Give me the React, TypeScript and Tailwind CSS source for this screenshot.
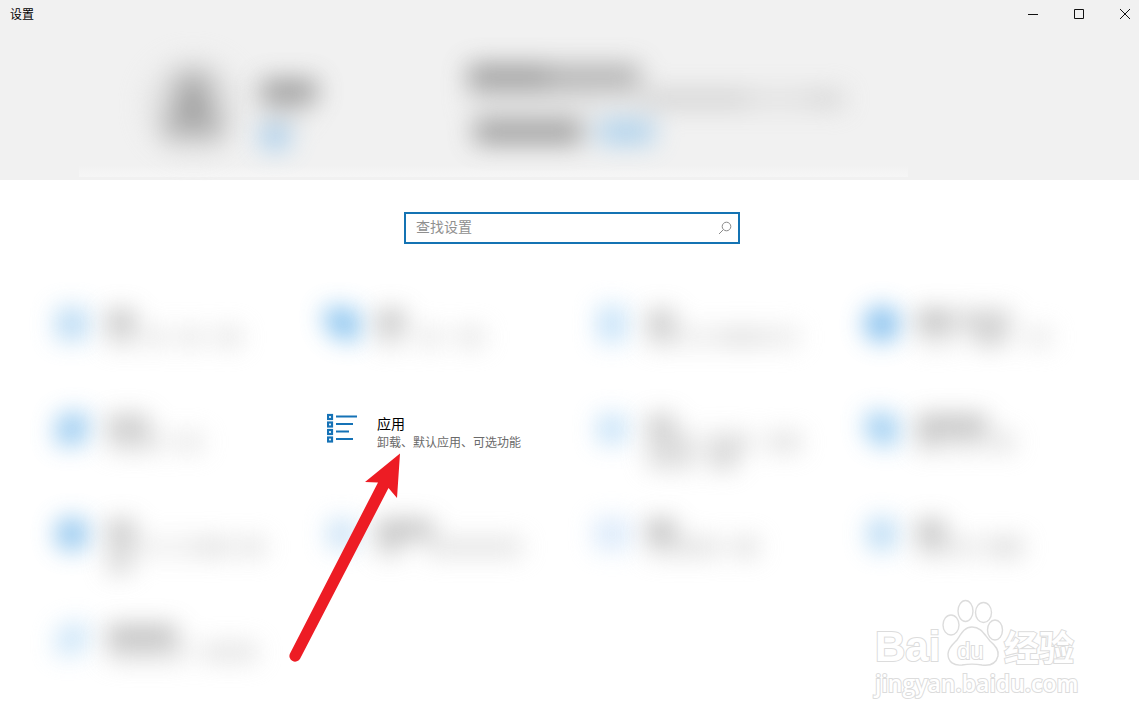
import React, { useState } from 'react';

type Bar = { width: number; tone: string };

type Category = {
  id: string;
  icon: string;
  title: Bar[];
  lines: Bar[][];
};

const GAP = 'bg-transparent';

// Categories whose names are hidden behind a blur
const hiddenBefore: Category[] = [
  {
    id: 'system',
    icon: 'w-8 h-8 bg-[#aed5f2]',
    title: [{ width: 28, tone: 'bg-[#acacac]' }],
    lines: [[{ width: 28, tone: 'bg-[#d2d2d2]' }, { width: 8, tone: GAP }, { width: 25, tone: 'bg-[#dedede]' }, { width: 12, tone: GAP }, { width: 22, tone: 'bg-[#d8d8d8]' }, { width: 14, tone: GAP }, { width: 25, tone: 'bg-[#d8d8d8]' }]],
  },
  {
    id: 'devices',
    icon: 'w-9 h-8 rounded-bl-3xl rounded-tr-xl bg-[#74b9ec]',
    title: [{ width: 28, tone: 'bg-[#acacac]' }],
    lines: [[{ width: 26, tone: 'bg-[#d4d4d4]' }, { width: 14, tone: GAP }, { width: 26, tone: 'bg-[#dedede]' }, { width: 14, tone: GAP }, { width: 27, tone: 'bg-[#dadada]' }]],
  },
  {
    id: 'phone',
    icon: 'w-7 h-9 bg-[#bbddf7]',
    title: [{ width: 28, tone: 'bg-[#b6b6b6]' }],
    lines: [[{ width: 28, tone: 'bg-[#cecece]' }, { width: 48, tone: 'bg-[#e6e6e6]' }, { width: 36, tone: 'bg-[#d4d4d4]' }, { width: 40, tone: 'bg-[#e2e2e2]' }]],
  },
  {
    id: 'network',
    icon: 'w-9 h-9 rounded-full bg-[#70b5eb]',
    title: [{ width: 34, tone: 'bg-[#a4a4a4]' }, { width: 6, tone: GAP }, { width: 54, tone: 'bg-[#c2c2c2]' }],
    lines: [[{ width: 40, tone: 'bg-[#dedede]' }, { width: 16, tone: GAP }, { width: 34, tone: 'bg-[#c2c2c2]' }, { width: 18, tone: GAP }, { width: 26, tone: 'bg-[#e0e0e0]' }]],
  },
  {
    id: 'personalization',
    icon: 'w-8 h-8 rounded-tl-xl rounded-br-xl bg-[#88c2ee]',
    title: [{ width: 42, tone: 'bg-[#b6b6b6]' }],
    lines: [[{ width: 54, tone: 'bg-[#d2d2d2]' }, { width: 12, tone: GAP }, { width: 30, tone: 'bg-[#dedede]' }]],
  },
];

const hiddenAfter: Category[] = [
  {
    id: 'accounts',
    icon: 'w-7 h-7 bg-[#b8dbf6]',
    title: [{ width: 28, tone: 'bg-[#b6b6b6]' }],
    lines: [
      [{ width: 44, tone: 'bg-[#d0d0d0]' }, { width: 20, tone: 'bg-[#eeeeee]' }, { width: 40, tone: 'bg-[#d0d0d0]' }, { width: 16, tone: GAP }, { width: 34, tone: 'bg-[#d4d4d4]' }],
      [{ width: 48, tone: 'bg-[#d2d2d2]' }, { width: 14, tone: GAP }, { width: 28, tone: 'bg-[#c6c6c6]' }],
    ],
  },
  {
    id: 'time',
    icon: 'w-8 h-8 rounded-tr-xl rounded-bl-2xl bg-[#8ac4ef]',
    title: [{ width: 70, tone: 'bg-[#a8a8a8]' }],
    lines: [[{ width: 28, tone: 'bg-[#cacaca]' }, { width: 8, tone: GAP }, { width: 28, tone: 'bg-[#d8d8d8]' }, { width: 8, tone: GAP }, { width: 25, tone: 'bg-[#d4d4d4]' }]],
  },
  {
    id: 'gaming',
    icon: 'w-8 h-8 rounded-xl bg-[#7cbbeb]',
    title: [{ width: 28, tone: 'bg-[#b2b2b2]' }],
    lines: [
      [{ width: 28, tone: 'bg-[#d0d0d0]' }, { width: 60, tone: 'bg-[#e9e9e9]' }, { width: 36, tone: 'bg-[#d6d6d6]' }, { width: 8, tone: GAP }, { width: 26, tone: 'bg-[#d8d8d8]' }],
      [{ width: 25, tone: 'bg-[#cccccc]' }],
    ],
  },
  {
    id: 'ease',
    icon: 'w-7 h-7 bg-[#bfdcf4]',
    title: [{ width: 56, tone: 'bg-[#a8a8a8]' }],
    lines: [[{ width: 25, tone: 'bg-[#c8c8c8]' }, { width: 24, tone: GAP }, { width: 96, tone: 'bg-[#d9d9d9]' }]],
  },
  {
    id: 'search',
    icon: 'w-9 h-8 bg-[#d6e7fa]',
    title: [{ width: 28, tone: 'bg-[#a0a0a0]' }],
    lines: [[{ width: 74, tone: 'bg-[#d6d6d6]' }, { width: 12, tone: GAP }, { width: 25, tone: 'bg-[#d2d2d2]' }]],
  },
  {
    id: 'privacy',
    icon: 'w-7 h-8 rounded-lg bg-[#acd4f2]',
    title: [{ width: 28, tone: 'bg-[#aaaaaa]' }],
    lines: [[{ width: 26, tone: 'bg-[#cecece]' }, { width: 36, tone: 'bg-[#dedede]' }, { width: 8, tone: GAP }, { width: 36, tone: 'bg-[#cecece]' }]],
  },
  {
    id: 'update',
    icon: 'w-8 h-8 rounded-tl-2xl rounded-br-2xl bg-[#c4e1f7]',
    title: [{ width: 70, tone: 'bg-[#a8a8a8]' }],
    lines: [[{ width: 50, tone: 'bg-[#d2d2d2]' }, { width: 30, tone: 'bg-[#d8d8d8]' }, { width: 14, tone: GAP }, { width: 56, tone: 'bg-[#d9d9d9]' }]],
  },
];

function BarRow({ bars }: { bars: Bar[] }) {
  return (
    <span className="flex h-[18px] items-center">
      {bars.map((bar, i) => (
        <span key={i} className={`h-[18px] ${bar.tone}`} style={{ width: bar.width }} />
      ))}
    </span>
  );
}

function HiddenTile({ category }: { category: Category }) {
  return (
    <a href={`#${category.id}`} className="flex items-start gap-[17px]">
      <span className="flex h-8 w-9 shrink-0 items-center justify-center opacity-85 blur-[12px]">
        <span className={category.icon} />
      </span>
      <span className="flex flex-col pt-0.5 opacity-75 blur-[12px]">
        <BarRow bars={category.title} />
        {category.lines.map((line, i) => (
          <BarRow key={i} bars={line} />
        ))}
      </span>
    </a>
  );
}

function AppsIcon() {
  return (
    <svg width="30" height="30" viewBox="0 0 30 30" fill="none" aria-hidden="true">
      {[1, 8.5, 16, 23.5].map((y) => (
        <rect key={y} x="1" y={y + 1} width="4" height="4" stroke="#1572b6" strokeWidth="2.2" />
      ))}
      <path d="M9 3.5h21M9 11h17M9 18.5h13M9 26h17" stroke="#1572b6" strokeWidth="2.2" />
    </svg>
  );
}

function Arrow() {
  return (
    <svg
      className="pointer-events-none absolute -left-10 top-10 z-10"
      width="120"
      height="212"
      viewBox="284 453 120 212"
      aria-hidden="true"
    >
      <path
        d="M400 453.5L365 482L378 482.5L290 653.5A5.6 5.6 0 0 0 300.2 658.5L388.5 488L397 498Z"
        fill="#ed1c24"
      />
    </svg>
  );
}

function AppsTile() {
  return (
    <a href="#apps" className="relative flex items-start gap-[17px]">
      <span className="flex w-9 shrink-0 justify-center">
        <AppsIcon />
      </span>
      <span className="flex flex-col pt-px">
        <span className="text-sm leading-[18px] text-black">应用</span>
        <span className="text-xs leading-5 whitespace-nowrap text-[#6a6a6a]">卸载、默认应用、可选功能</span>
      </span>
      <Arrow />
    </a>
  );
}

function TitleBar() {
  return (
    <div className="flex h-7 items-center justify-between pl-2.5">
      <h1 className="text-xs text-black">设置</h1>
      <div className="flex gap-[18px]">
        <button type="button" aria-label="最小化" className="flex h-7 w-7 items-center justify-center">
          <svg width="12" height="12" viewBox="0 0 12 12" stroke="#111" fill="none">
            <path d="M1 6.5h10" />
          </svg>
        </button>
        <button type="button" aria-label="最大化" className="flex h-7 w-7 items-center justify-center">
          <svg width="12" height="12" viewBox="0 0 12 12" stroke="#111" fill="none">
            <path d="M1.5 1.5h9v9h-9z" />
          </svg>
        </button>
        <button type="button" aria-label="关闭" className="flex h-7 w-7 items-center justify-center">
          <svg width="12" height="12" viewBox="0 0 12 12" stroke="#111" fill="none">
            <path d="M1 1l10 10M11 1L1 11" />
          </svg>
        </button>
      </div>
    </div>
  );
}

function AccountHeader() {
  return (
    <div className="flex flex-1 items-start pl-[149px]">
      <svg className="mt-8 shrink-0 overflow-visible opacity-75 blur-[14px]" width="88" height="88" viewBox="0 0 88 88" aria-hidden="true">
        <circle cx="44" cy="46" r="46" fill="#dadada" />
        <path d="M30 18Q44 8 58 18L63 50L75 76L60 79Q44 62 28 79L13 76L25 50Z" fill="#8a8a8a" />
      </svg>
      <div className="mt-[52px] ml-6 flex w-[207px] shrink-0 flex-col items-start opacity-75 blur-[13px]">
        <span className="h-[22px] w-14 bg-[#787878]" />
        <span className="mt-1.5 h-3 w-11 bg-[#cccccc]" />
        <span className="mt-1.5 h-[22px] w-7 bg-[#84bce9]" />
      </div>
      <div className="mt-[37px] flex flex-col items-start opacity-75 blur-[13px]">
        <span className="flex">
          <span className="h-[22px] w-20 bg-[#787878]" />
          <span className="h-[22px] w-[92px] bg-[#969696]" />
        </span>
        <span className="mt-1 flex">
          <span className="h-4 w-[120px] bg-[#d4d4d4]" />
          <span className="h-4 w-14 bg-[#dadada]" />
          <span className="h-4 w-[104px] bg-[#c2c2c2]" />
          <span className="h-4 w-[60px] bg-[#d8d8d8]" />
          <span className="h-4 w-9 bg-[#c8c8c8]" />
        </span>
        <span className="mt-3.5 flex gap-4 pl-1.5">
          <span className="h-[22px] w-[108px] bg-[#787878]" />
          <span className="h-[22px] w-14 bg-[#8fc3ea]" />
        </span>
      </div>
    </div>
  );
}

function Watermark() {
  return (
    <svg
      className="pointer-events-none absolute right-[59px] bottom-[19px]"
      width="210"
      height="108"
      viewBox="870 596 210 108"
      fill="#fff"
      stroke="#dcdcdc"
      strokeWidth="1.4"
      aria-hidden="true"
    >
      <ellipse cx="951" cy="625" rx="8" ry="10" />
      <ellipse cx="965.5" cy="611" rx="7.5" ry="10.5" />
      <ellipse cx="983.5" cy="612.5" rx="8" ry="10" />
      <ellipse cx="995" cy="630" rx="7.5" ry="10" />
      <path d="M972 627C981 627 984 634 990 641C996 646 999 650 998 656C996 664 990 666 982 665C976 664 968 664 962 665C954 666 948 662 948 654C948 648 953 644 957 640C961 634 964 627 972 627Z" />
      <g strokeWidth="2" paintOrder="stroke" fontWeight="700">
        <text x="875" y="661" fontSize="42" fontFamily="Liberation Sans, sans-serif">Bai</text>
        <text x="957" y="659" fontSize="24" fontWeight="400" fontFamily="Liberation Sans, sans-serif">du</text>
        <text x="1004" y="661" fontSize="35" fontFamily="Noto Sans CJK SC, sans-serif">经验</text>
        <text x="875" y="692" fontSize="23" fontWeight="600" fontFamily="Open Sans, sans-serif">jingyan.baidu.com</text>
      </g>
    </svg>
  );
}

export default function App() {
  const [query, setQuery] = useState('');

  return (
    <div className="relative min-h-screen overflow-x-hidden bg-white font-['Noto_Sans_CJK_SC',sans-serif]">
      <header className="flex h-[180px] flex-col bg-[#f1f1f1]">
        <TitleBar />
        <AccountHeader />
        <div className="mb-[3px] ml-[79px] h-3 max-w-[829px] bg-linear-to-b from-[#f1f1f1] to-[#f6f6f6]" />
      </header>

      <main>
        <form role="search" className="flex justify-center pt-8 pl-[5px]" onSubmit={(e) => e.preventDefault()}>
          <div className="flex h-8 w-[336px] items-center border-2 border-[#1473b3] bg-white pr-1.5 pl-2.5">
            <input
              type="text"
              aria-label="查找设置"
              placeholder="查找设置"
              value={query}
              onChange={(e) => setQuery(e.target.value)}
              className="min-w-0 flex-1 bg-transparent pb-1 text-sm leading-5 text-black outline-none placeholder:text-[#8f8f8f]"
            />
            <button type="submit" aria-label="搜索">
              <svg width="14" height="14" viewBox="0 0 14 14" fill="none" stroke="#8a8a8a">
                <circle cx="8.5" cy="5.5" r="4.3" />
                <path d="M5.4 8.6L1 13" />
              </svg>
            </button>
          </div>
        </form>

        <nav className="grid auto-rows-[64px] grid-cols-4 gap-y-[41px] pt-16 pr-[5px] pl-[54px]">
          {hiddenBefore.map((category) => (
            <HiddenTile key={category.id} category={category} />
          ))}
          <AppsTile />
          {hiddenAfter.map((category) => (
            <HiddenTile key={category.id} category={category} />
          ))}
        </nav>
      </main>

      <Watermark />
    </div>
  );
}
